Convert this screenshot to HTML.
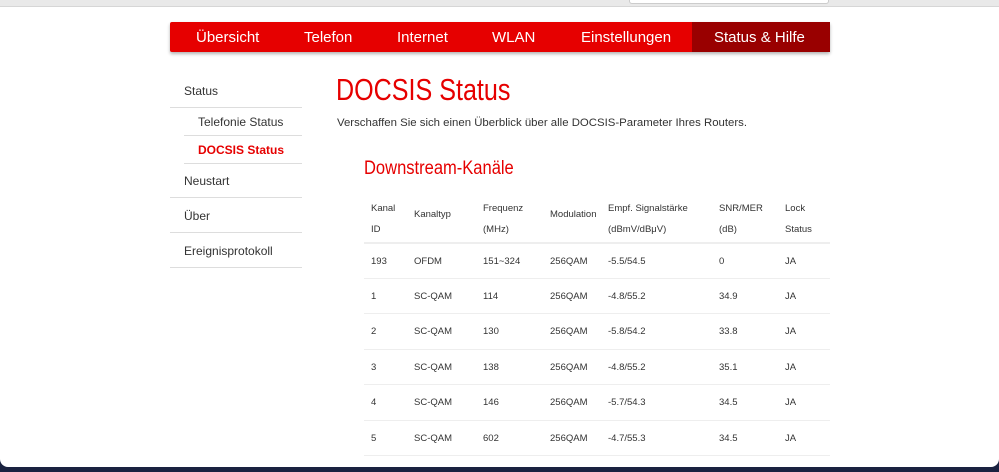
<!DOCTYPE html>
<html><head><meta charset="utf-8"><style>
*{margin:0;padding:0;box-sizing:border-box}
body{width:999px;height:472px;overflow:hidden;background:#1a2240;font-family:"Liberation Sans",Arial,sans-serif;position:relative}
.page{position:absolute;left:0;top:0;width:999px;height:467px;background:#fff;border-radius:0 0 8px 8px;overflow:hidden}
.top{position:absolute;left:0;top:0;width:999px;height:7px;background:#e9e9e9;border-bottom:1px solid #d6d6d6}
.box{position:absolute;left:629px;top:0;width:200px;height:4px;background:#fff;border:1px solid #ccc;border-top:none;border-radius:0 0 3px 3px}
.nav{position:absolute;left:170px;top:22px;width:660px;height:30px;background:#e60000;box-shadow:0 2px 3px rgba(0,0,0,.3);border-radius:2px}
.nav span{position:absolute;top:7px;color:#fff;font-size:15px}
.nav .act{position:absolute;left:522px;top:0;width:138px;height:30px;background:#990000}
.t{position:absolute;white-space:nowrap}
.side{font-size:12px;color:#333}
.l{position:absolute;height:1px;background:#ddd}
.th,.td{font-size:9.5px;color:#333}
</style></head><body><div class="page">
<div class="top"></div><div class="box"></div>
<div class="nav"><div class="act"></div>
<span style="left:26px">Übersicht</span><span style="left:134px">Telefon</span><span style="left:227px">Internet</span><span style="left:322px">WLAN</span><span style="left:411px">Einstellungen</span><span style="left:544px">Status &amp; Hilfe</span></div>

<div class="t side" style="left:184px;top:84px">Status</div><div class="l" style="left:170px;top:107px;width:132px"></div>
<div class="t side" style="left:198px;top:115px">Telefonie Status</div><div class="l" style="left:184px;top:135px;width:118px"></div>
<div class="t side" style="left:198px;top:143px;color:#e60000;font-weight:bold">DOCSIS Status</div><div class="l" style="left:184px;top:163px;width:118px"></div>
<div class="t side" style="left:184px;top:174px">Neustart</div><div class="l" style="left:170px;top:197px;width:132px"></div>
<div class="t side" style="left:184px;top:209px">Über</div><div class="l" style="left:170px;top:232px;width:132px"></div>
<div class="t side" style="left:184px;top:244px">Ereignisprotokoll</div><div class="l" style="left:170px;top:267px;width:132px"></div>

<div class="t" style="left:336px;top:72px;font-size:31px;color:#e60000;transform:scaleX(.81);transform-origin:0 0">DOCSIS Status</div>
<div class="t" style="left:337px;top:117px;font-size:11.4px;color:#333">Verschaffen Sie sich einen Überblick über alle DOCSIS-Parameter Ihres Routers.</div>
<div class="t" style="left:364px;top:158px;font-size:19px;color:#e60000;transform:scaleX(.87);transform-origin:0 0">Downstream-Kanäle</div>

<div class="t th" style="left:371px;top:198px;line-height:21px">Kanal<br>ID</div>
<div class="t th" style="left:414px;top:209px">Kanaltyp</div>
<div class="t th" style="left:483px;top:198px;line-height:21px">Frequenz<br>(MHz)</div>
<div class="t th" style="left:550px;top:209px">Modulation</div>
<div class="t th" style="left:608px;top:198px;line-height:21px">Empf. Signalstärke<br>(dBmV/dBμV)</div>
<div class="t th" style="left:719px;top:198px;line-height:21px">SNR/MER<br>(dB)</div>
<div class="t th" style="left:785px;top:198px;line-height:21px">Lock<br>Status</div>
<div class="l" style="left:364px;top:242px;width:466px;height:2px;background:#eee"></div>

<div style="position:absolute;left:0;top:1px">
<div class="t td" style="left:371px;top:255px">193</div><div class="t td" style="left:414px;top:255px">OFDM</div><div class="t td" style="left:483px;top:255px">151~324</div><div class="t td" style="left:550px;top:255px">256QAM</div><div class="t td" style="left:608px;top:255px">-5.5/54.5</div><div class="t td" style="left:719px;top:255px">0</div><div class="t td" style="left:785px;top:255px">JA</div>
<div class="l" style="left:364px;top:277px;width:466px;background:#eee"></div>
<div class="t td" style="left:371px;top:290px">1</div><div class="t td" style="left:414px;top:290px">SC-QAM</div><div class="t td" style="left:483px;top:290px">114</div><div class="t td" style="left:550px;top:290px">256QAM</div><div class="t td" style="left:608px;top:290px">-4.8/55.2</div><div class="t td" style="left:719px;top:290px">34.9</div><div class="t td" style="left:785px;top:290px">JA</div>
<div class="l" style="left:364px;top:312px;width:466px;background:#eee"></div>
<div class="t td" style="left:371px;top:325px">2</div><div class="t td" style="left:414px;top:325px">SC-QAM</div><div class="t td" style="left:483px;top:325px">130</div><div class="t td" style="left:550px;top:325px">256QAM</div><div class="t td" style="left:608px;top:325px">-5.8/54.2</div><div class="t td" style="left:719px;top:325px">33.8</div><div class="t td" style="left:785px;top:325px">JA</div>
<div class="l" style="left:364px;top:348px;width:466px;background:#eee"></div>
<div class="t td" style="left:371px;top:361px">3</div><div class="t td" style="left:414px;top:361px">SC-QAM</div><div class="t td" style="left:483px;top:361px">138</div><div class="t td" style="left:550px;top:361px">256QAM</div><div class="t td" style="left:608px;top:361px">-4.8/55.2</div><div class="t td" style="left:719px;top:361px">35.1</div><div class="t td" style="left:785px;top:361px">JA</div>
<div class="l" style="left:364px;top:383px;width:466px;background:#eee"></div>
<div class="t td" style="left:371px;top:396px">4</div><div class="t td" style="left:414px;top:396px">SC-QAM</div><div class="t td" style="left:483px;top:396px">146</div><div class="t td" style="left:550px;top:396px">256QAM</div><div class="t td" style="left:608px;top:396px">-5.7/54.3</div><div class="t td" style="left:719px;top:396px">34.5</div><div class="t td" style="left:785px;top:396px">JA</div>
<div class="l" style="left:364px;top:419px;width:466px;background:#eee"></div>
<div class="t td" style="left:371px;top:432px">5</div><div class="t td" style="left:414px;top:432px">SC-QAM</div><div class="t td" style="left:483px;top:432px">602</div><div class="t td" style="left:550px;top:432px">256QAM</div><div class="t td" style="left:608px;top:432px">-4.7/55.3</div><div class="t td" style="left:719px;top:432px">34.5</div><div class="t td" style="left:785px;top:432px">JA</div>
<div class="l" style="left:364px;top:454px;width:466px;background:#eee"></div>
</div>
</div></body></html>
